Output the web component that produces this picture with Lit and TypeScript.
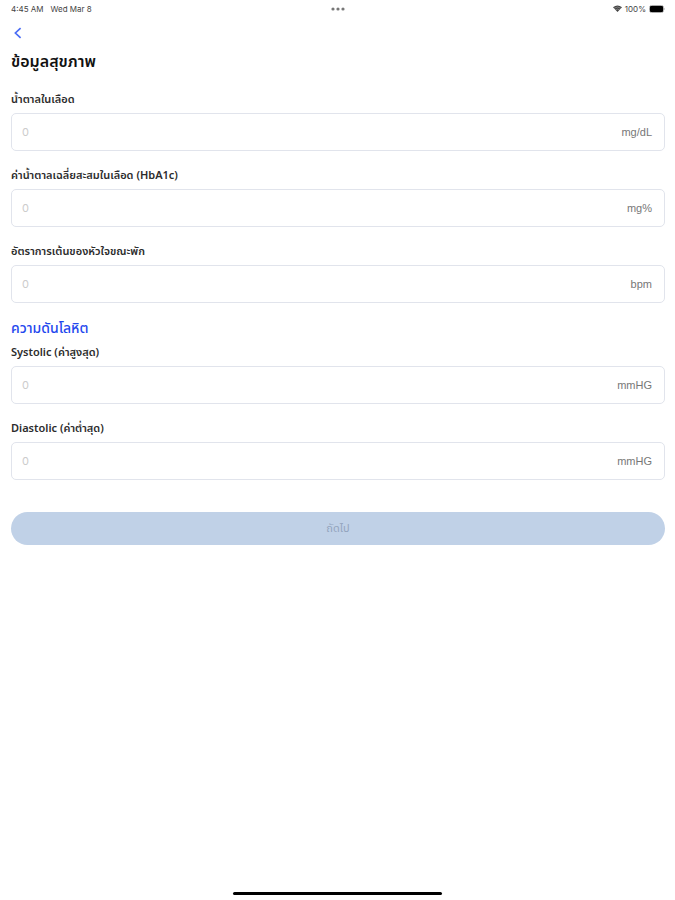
import { LitElement, html, css } from "lit";
import { customElement, property } from "lit/decorators.js";

@customElement("metric-field")
class MetricField extends LitElement {
  @property() label = "";
  @property() unit = "";

  static styles = css`
    :host {
      display: block;
    }
    .label {
      display: block;
      font-size: 11px;
      line-height: 16px;
      font-weight: 600;
      color: #2c2c2c;
      margin-bottom: 6px;
      white-space: nowrap;
    }
    .box {
      display: flex;
      align-items: center;
      box-sizing: border-box;
      height: 38px;
      padding: 0 12px 0 10px;
      border: 1px solid #e1e4ec;
      border-radius: 5px;
      background: #ffffff;
    }
    .input {
      flex: 1;
      min-width: 0;
      border: 0;
      padding: 0;
      outline: none;
      background: transparent;
      font-family: Inter, "Liberation Sans", sans-serif;
      font-size: 11px;
      color: #222222;
    }
    .input::placeholder {
      color: #cccccc;
      opacity: 1;
    }
    .unit {
      font-family: "Liberation Sans", Arial, sans-serif;
      font-size: 11px;
      line-height: 16px;
      color: #777777;
    }
  `;

  render() {
    return html`
      <label class="label" for="value">${this.label}</label>
      <div class="box">
        <input class="input" id="value" inputmode="decimal" placeholder="0" />
        <span class="unit">${this.unit}</span>
      </div>
    `;
  }
}

@customElement("app-root")
class AppRoot extends LitElement {
  static styles = css`
    :host {
      display: flex;
      flex-direction: column;
      box-sizing: border-box;
      min-height: 100vh;
      background: #ffffff;
      font-family: "Noto Sans", "Noto Sans Thai", sans-serif;
      color: #111111;
    }
    .status {
      display: grid;
      grid-template-columns: 1fr auto 1fr;
      align-items: center;
      height: 17px;
      padding: 0 10px 0 11px;
      font-family: Inter, "Liberation Sans", sans-serif;
      font-size: 8px;
      line-height: 10px;
      color: #444444;
    }
    .clock {
      display: flex;
      gap: 7px;
    }
    .power {
      display: flex;
      align-items: center;
      justify-content: flex-end;
      gap: 3px;
    }
    .icon {
      display: block;
    }
    .content {
      flex: 1;
      padding: 8px 10px 0 11px;
    }
    .back {
      display: flex;
      align-items: center;
      width: 16px;
      height: 16px;
      padding: 0 3px;
      border: 0;
      background: none;
    }
    .title {
      margin: 8px 0 18px;
      font-size: 16px;
      line-height: 24px;
      font-weight: 600;
      white-space: nowrap;
    }
    .group {
      display: flex;
      flex-direction: column;
      gap: 16px;
    }
    .section {
      margin: 15px 0 6px;
      font-size: 14px;
      line-height: 20px;
      font-weight: 500;
      color: #1f48ee;
    }
    .next {
      display: block;
      width: 100%;
      height: 33px;
      margin-top: 32px;
      border: 0;
      border-radius: 17px;
      background: #c0d1e7;
      color: #94a5be;
      font: inherit;
      font-size: 11px;
    }
    .home {
      align-self: center;
      width: 31%;
      height: 3px;
      margin: 16px 0 5px;
      border-radius: 2px;
      background: #000000;
    }
  `;

  render() {
    return html`
      <header class="status">
        <div class="clock"><span>4:45 AM</span><span>Wed Mar 8</span></div>
        <svg class="icon" width="16" height="4" viewBox="0 0 16 4" fill="#777">
          <circle cx="3" cy="2" r="1.6" />
          <circle cx="8" cy="2" r="1.6" />
          <circle cx="13" cy="2" r="1.6" />
        </svg>
        <div class="power">
          <svg class="icon" width="9" height="7" viewBox="0 0 9 7">
            <path d="M0 2.3Q4.5-1.4 9 2.3L4.5 7Z" fill="#444" />
            <path d="M1.2 3.2Q4.5.8 7.8 3.2M2.6 4.8Q4.5 3.4 6.4 4.8" fill="none" stroke="#bbb" stroke-width=".5" />
          </svg>
          <span>100%</span>
          <svg class="icon" width="16" height="8" viewBox="0 0 16 8">
            <rect x=".5" y=".5" width="14" height="7" rx="2" fill="none" stroke="#aaa" />
            <rect x="1" y="1" width="13" height="6" rx="1" fill="#000" />
            <path d="M15 2.8Q16.2 4 15 5.2Z" fill="#999" />
          </svg>
        </div>
      </header>
      <main class="content">
        <button class="back" aria-label="ย้อนกลับ">
          <svg class="icon" width="8" height="12" viewBox="0 0 8 12" fill="none" stroke="#4a6cf5" stroke-width="1.7">
            <path d="M6.6 1.2L1.4 6L6.6 10.8" />
          </svg>
        </button>
        <h1 class="title">ข้อมูลสุขภาพ</h1>
        <div class="group">
          <metric-field label="น้ำตาลในเลือด" unit="mg/dL"></metric-field>
          <metric-field label="ค่าน้ำตาลเฉลี่ยสะสมในเลือด (HbA1c)" unit="mg%"></metric-field>
          <metric-field label="อัตราการเต้นของหัวใจขณะพัก" unit="bpm"></metric-field>
        </div>
        <h2 class="section">ความดันโลหิต</h2>
        <div class="group">
          <metric-field label="Systolic (ค่าสูงสุด)" unit="mmHG"></metric-field>
          <metric-field label="Diastolic (ค่าต่ำสุด)" unit="mmHG"></metric-field>
        </div>
        <button class="next" disabled>ถัดไป</button>
      </main>
      <div class="home"></div>
    `;
  }
}
